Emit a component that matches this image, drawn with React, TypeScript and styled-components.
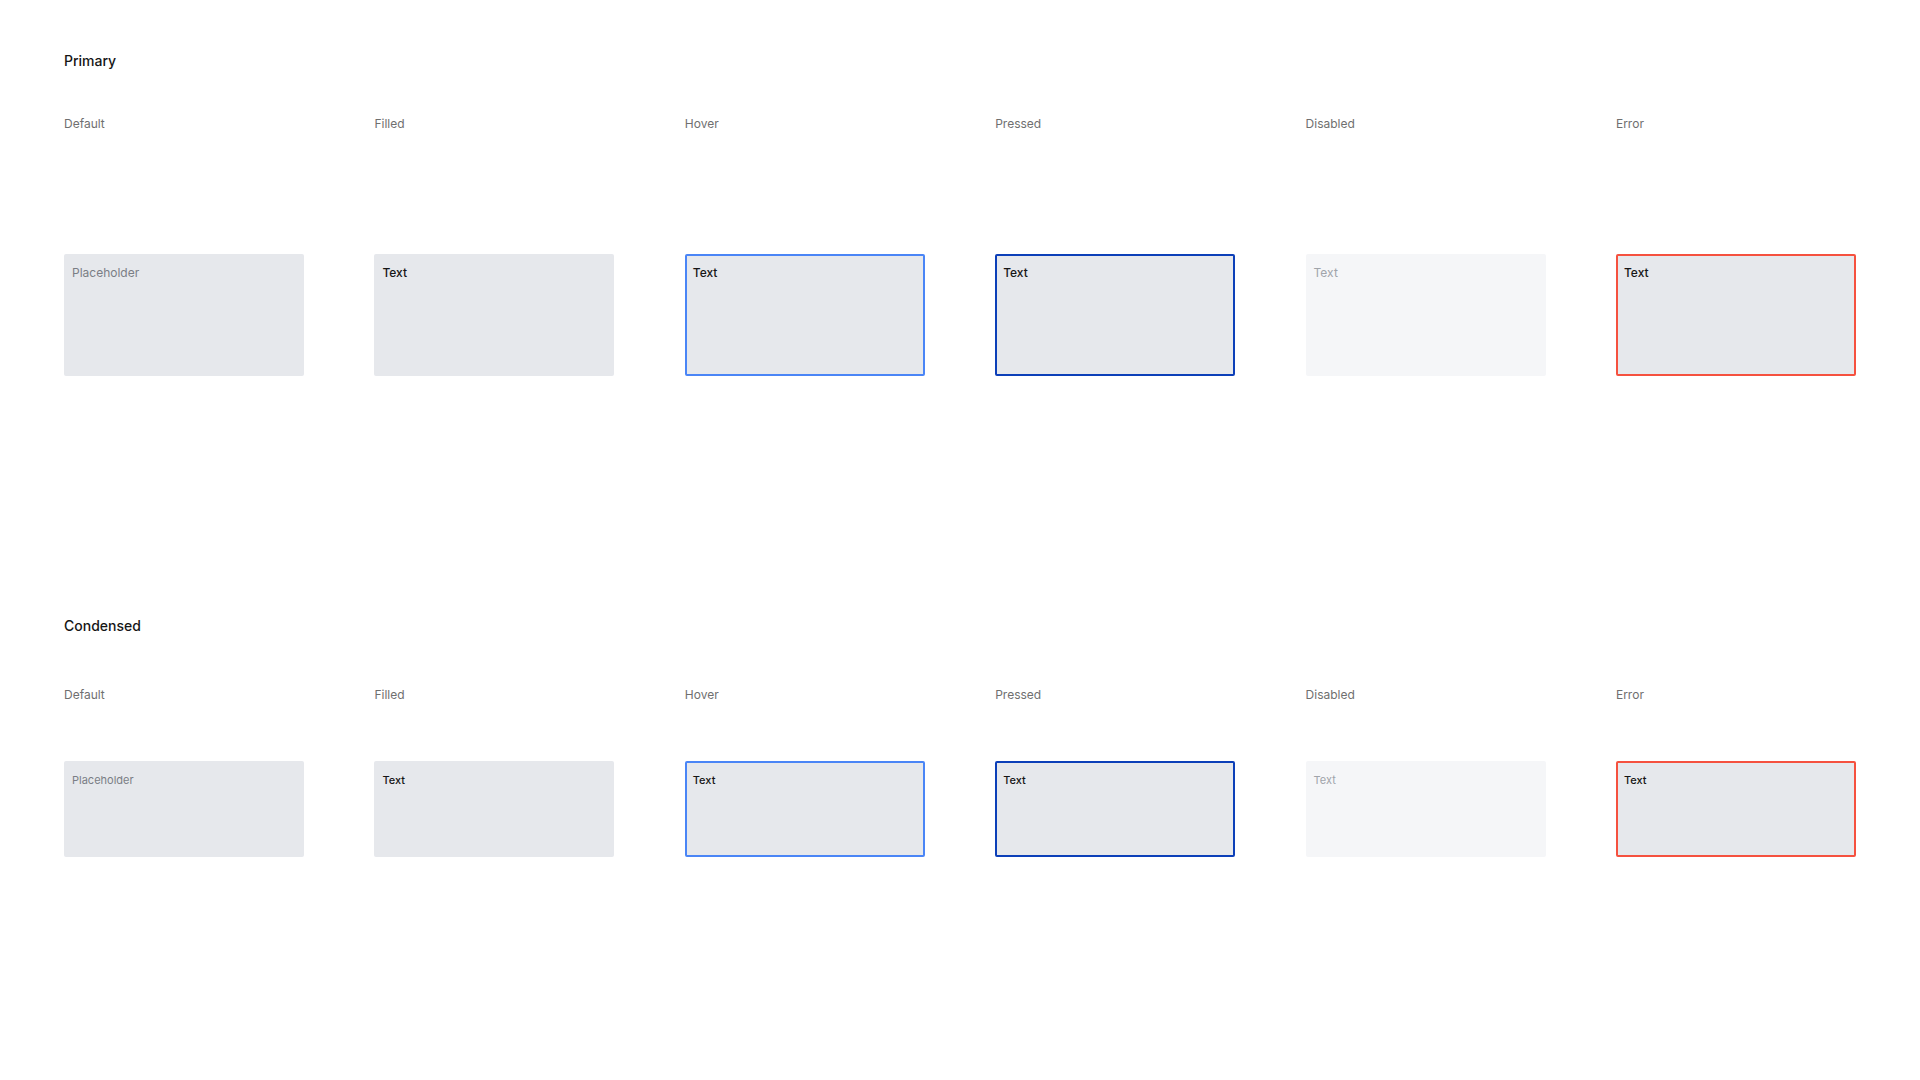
import React from "react";
import styled, { createGlobalStyle, css } from "styled-components";

const Global = createGlobalStyle`
  html, body { margin: 0; padding: 0; background: #ffffff; }
  body { font-family: Inter, "Noto Sans", "Liberation Sans", sans-serif; -webkit-font-smoothing: antialiased; }
`;

type State = "default" | "filled" | "hover" | "pressed" | "disabled" | "error";
type Size = "primary" | "condensed";

const Page = styled.div`
  padding: 52px 64px 0 64px;
  display: flex;
  flex-direction: column;
`;

const Section = styled.section<{ $size: Size }>`
  display: flex;
  flex-direction: column;
  ${(p) =>
    p.$size === "condensed"
      ? css`
          margin-top: 241px;
        `
      : ""}
`;

const SectionTitle = styled.h2`
  margin: 0;
  font-size: 14px;
  line-height: 18px;
  font-weight: 500;
  color: #161616;
  letter-spacing: 0;
`;

const Grid = styled.div<{ $size: Size }>`
  display: grid;
  grid-template-columns: repeat(6, 240px);
  justify-content: space-between;
  margin-top: ${(p) => (p.$size === "primary" ? "46px" : "52px")};
`;

const Column = styled.div`
  display: flex;
  flex-direction: column;
`;

const StateLabel = styled.div<{ $size: Size }>`
  font-size: 12px;
  line-height: 16px;
  color: #6f6f6f;
  margin-bottom: ${(p) => (p.$size === "primary" ? "122px" : "58px")};
`;

const borderFor = (s: State) => {
  switch (s) {
    case "hover":
      return "#4a85f6";
    case "pressed":
      return "#0c3fb8";
    case "error":
      return "#f5513f";
    default:
      return "transparent";
  }
};

const Field = styled.div<{ $state: State; $size: Size }>`
  box-sizing: border-box;
  width: 240px;
  height: ${(p) => (p.$size === "primary" ? "122px" : "96px")};
  border-radius: 2px;
  background: ${(p) => (p.$state === "disabled" ? "#f5f6f8" : "#e6e8ec")};
  border: 2px solid ${(p) => borderFor(p.$state)};
  padding: 9px 0 0 6px;
`;

const FieldText = styled.span<{ $state: State; $size: Size }>`
  display: block;
  font-size: ${(p) => (p.$size === "primary" ? "12px" : "11px")};
  line-height: 16px;
  font-weight: ${(p) =>
    p.$state === "default" || p.$state === "disabled" ? 400 : 500};
  color: ${(p) =>
    p.$state === "default"
      ? "#7a7e85"
      : p.$state === "disabled"
      ? "#a0a4aa"
      : "#161616"};
`;

const states: { key: State; label: string; value: string }[] = [
  { key: "default", label: "Default", value: "Placeholder" },
  { key: "filled", label: "Filled", value: "Text" },
  { key: "hover", label: "Hover", value: "Text" },
  { key: "pressed", label: "Pressed", value: "Text" },
  { key: "disabled", label: "Disabled", value: "Text" },
  { key: "error", label: "Error", value: "Text" },
];

const Group: React.FC<{ title: string; size: Size }> = ({ title, size }) => (
  <Section $size={size}>
    <SectionTitle>{title}</SectionTitle>
    <Grid $size={size}>
      {states.map((s) => (
        <Column key={s.key}>
          <StateLabel $size={size}>{s.label}</StateLabel>
          <Field $state={s.key} $size={size}>
            <FieldText $state={s.key} $size={size}>
              {s.value}
            </FieldText>
          </Field>
        </Column>
      ))}
    </Grid>
  </Section>
);

export default function App() {
  return (
    <>
      <Global />
      <Page>
        <Group title="Primary" size="primary" />
        <Group title="Condensed" size="condensed" />
      </Page>
    </>
  );
}
